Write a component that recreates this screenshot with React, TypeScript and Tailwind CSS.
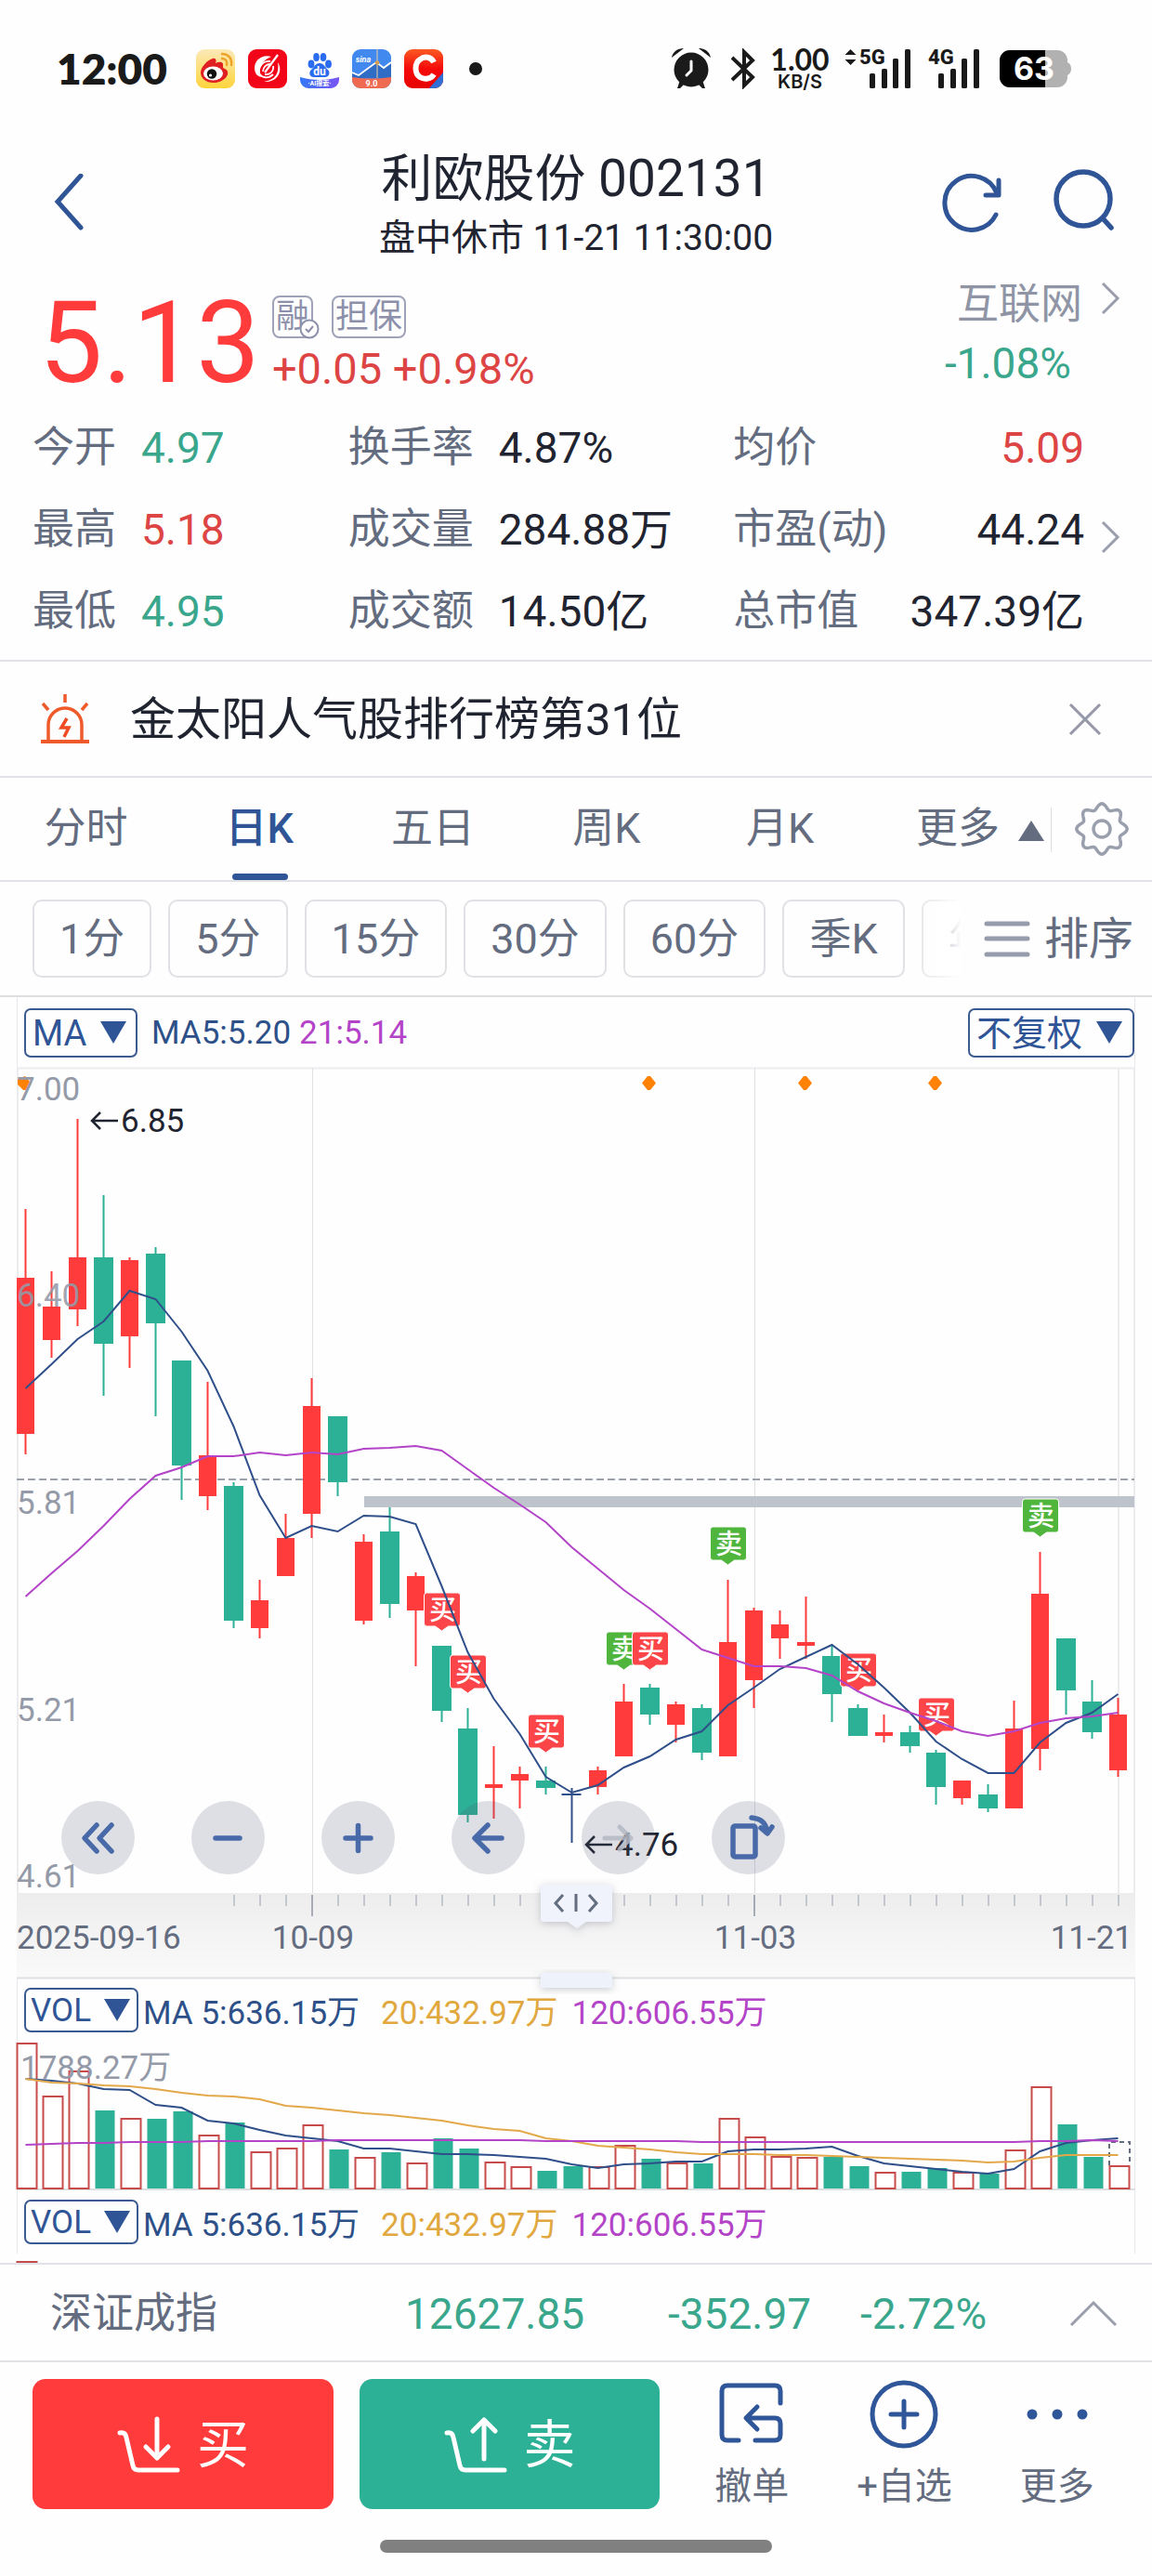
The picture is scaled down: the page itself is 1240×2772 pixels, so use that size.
import type { ReactNode } from "react";

type Candle = {
  up: boolean;
  high: number;
  top: number;
  bottom: number;
  low: number;
  vol: number;
};

// up/down, high, body top, body bottom, low, volume top (shared canvas units)
const RAW: [number, number, number, number, number, number][] = [
  [1, 1301, 1375, 1543, 1565, 2198],
  [1, 1368, 1406, 1442, 1461, 2255],
  [1, 1204, 1353, 1409, 1427, 2228],
  [0, 1286, 1353, 1446, 1502, 2271],
  [1, 1353, 1356, 1438, 1472, 2279],
  [0, 1342, 1349, 1424, 1524, 2280],
  [0, 1464, 1464, 1577, 1614, 2272],
  [1, 1487, 1566, 1610, 1625, 2297],
  [0, 1595, 1599, 1744, 1752, 2284],
  [1, 1700, 1722, 1752, 1763, 2315],
  [1, 1629, 1655, 1696, 1696, 2311],
  [1, 1483, 1513, 1629, 1655, 2286],
  [0, 1524, 1524, 1595, 1610, 2313],
  [1, 1651, 1659, 1744, 1748, 2321],
  [0, 1622, 1648, 1726, 1741, 2316],
  [1, 1692, 1696, 1733, 1793, 2327],
  [0, 1771, 1771, 1841, 1853, 2301],
  [0, 1838, 1860, 1953, 1961, 2312],
  [1, 1879, 1920, 1924, 1957, 2326],
  [1, 1901, 1909, 1916, 1946, 2331],
  [0, 1901, 1916, 1924, 1931, 2336],
  [0, 1924, 1931, 1931, 1983, 2331],
  [1, 1901, 1905, 1923, 1931, 2331],
  [1, 1812, 1831, 1890, 1890, 2308],
  [0, 1812, 1816, 1845, 1856, 2323],
  [1, 1831, 1834, 1856, 1875, 2327],
  [0, 1834, 1838, 1886, 1894, 2328],
  [1, 1700, 1767, 1890, 1890, 2279],
  [1, 1730, 1733, 1808, 1838, 2299],
  [1, 1733, 1748, 1763, 1785, 2320],
  [1, 1718, 1767, 1771, 1785, 2321],
  [0, 1771, 1782, 1823, 1853, 2321],
  [0, 1834, 1838, 1868, 1868, 2331],
  [1, 1845, 1864, 1868, 1875, 2337],
  [0, 1857, 1864, 1879, 1886, 2337],
  [0, 1883, 1886, 1923, 1942, 2333],
  [1, 1916, 1916, 1935, 1942, 2337],
  [0, 1920, 1931, 1946, 1950, 2339],
  [1, 1830, 1860, 1946, 1946, 2313],
  [1, 1670, 1715, 1882, 1905, 2245],
  [0, 1763, 1763, 1819, 1845, 2286],
  [0, 1808, 1831, 1864, 1871, 2321],
  [1, 1827, 1845, 1905, 1912, 2330],
];

const CANDLES: Candle[] = RAW.map(([up, high, top, bottom, low, vol]) => ({
  up: up === 1,
  high,
  top,
  bottom,
  low,
  vol,
}));

const MA5 = [
  1494, 1468, 1441, 1422, 1389, 1398, 1433, 1475, 1535, 1609, 1655, 1642, 1648, 1631, 1632,
  1640, 1707, 1778, 1828, 1866, 1912, 1929, 1921, 1902, 1890, 1872, 1863, 1835, 1816, 1796,
  1783, 1770, 1791, 1816, 1843, 1874, 1893, 1908, 1908, 1875, 1854, 1843, 1823,
];
const MA21 = [
  1718, 1693, 1669, 1642, 1613, 1588, 1579, 1567, 1567, 1563, 1566, 1563, 1565, 1559, 1558,
  1556, 1561, 1581, 1601, 1619, 1638, 1665, 1688, 1711, 1731, 1753, 1775, 1784, 1793, 1793,
  1795, 1803, 1820, 1833, 1843, 1852, 1863, 1868, 1863, 1854, 1849, 1847, 1843,
];
const VMA5 = [
  2237, 2239, 2242, 2248, 2249, 2265, 2268, 2282, 2285, 2292, 2298, 2301, 2304, 2312, 2312,
  2315, 2318, 2318, 2319, 2321, 2323, 2329, 2333, 2329, 2328, 2326, 2326, 2315, 2313, 2313,
  2312, 2310, 2320, 2328, 2331, 2334, 2337, 2339, 2334, 2315, 2306, 2303, 2301,
];
const VMA20 = [
  2237, 2241, 2242, 2244, 2245, 2248, 2252, 2255, 2256, 2259, 2266, 2268, 2271, 2274, 2276,
  2279, 2282, 2287, 2291, 2293, 2301, 2304, 2309, 2311, 2313, 2316, 2318, 2318, 2318, 2319,
  2319, 2320, 2321, 2322, 2323, 2324, 2325, 2327, 2326, 2322, 2319, 2319, 2319,
];
const VMA120 = [
  2308, 2307, 2306, 2306, 2305, 2305, 2305, 2304, 2304, 2304, 2304, 2304, 2303, 2303, 2303,
  2303, 2303, 2303, 2303, 2303, 2304, 2304, 2304, 2304, 2304, 2304, 2305, 2305, 2305, 2305,
  2305, 2305, 2305, 2305, 2305, 2305, 2305, 2305, 2305, 2304, 2304, 2303, 2304,
];

const SIGNALS = [
  { i: 16, y: 1714, buy: true },
  { i: 17, y: 1781, buy: true },
  { i: 20, y: 1845, buy: true },
  { i: 23, y: 1756, buy: false },
  { i: 24, y: 1756, buy: true },
  { i: 27, y: 1643, buy: false },
  { i: 32, y: 1779, buy: true },
  { i: 35, y: 1827, buy: true },
  { i: 39, y: 1613, buy: false },
];

const RED = "#ff3b3b";
const GREEN = "#2cb096";
const BLUE = "#2f4f8a";
const PURPLE = "#b344c8";
const ORANGE = "#e3a84a";

const cx = (i: number) => 27.5 + i * 28;
const line = (ys: number[]) => ys.map((y, i) => `${cx(i)},${y}`).join(" ");

// eight-lobed outline of the settings gear
const GEAR = Array.from({ length: 96 }, (_, k) => {
  const a = (k / 96) * Math.PI * 2;
  const r = 24.2 + 3 * Math.cos(8 * a);
  return `${(30 + r * Math.sin(a)).toFixed(2)},${(30 - r * Math.cos(a)).toFixed(2)}`;
}).join(" ");

function AppIcons() {
  return (
    <div className="flex items-center gap-[14px]">
      <svg viewBox="0 0 42 42" className="size-[42px]">
        <defs>
          <linearGradient id="wb" x1="0" y1="0" x2="0" y2="1">
            <stop offset="0" stopColor="#fbe9b8" />
            <stop offset="1" stopColor="#ffd43c" />
          </linearGradient>
        </defs>
        <rect width="42" height="42" rx="9" fill="url(#wb)" />
        <path d="M5 25c0-6 8-14 13-15 4-1 4 3 3 5 4-2 9-2 8 3 0 2 0 2 2 3 8 4 0 15-12 15C10 36 5 31 5 25z" fill="#e01f22" />
        <ellipse cx="18.500" cy="26" rx="10.500" ry="7.500" fill="#fff" />
        <circle cx="17" cy="26.500" r="5.200" fill="#111" />
        <circle cx="15.500" cy="28" r="1.600" fill="#fff" />
        <path d="M28 5c7 0 11 5 10 12M28 10c4 0 6 3 5 7" fill="none" stroke="#eda229" strokeWidth="2.400" strokeLinecap="round" />
      </svg>
      <svg viewBox="0 0 42 42" className="size-[42px]">
        <rect width="42" height="42" rx="9" fill="#f20519" />
        <path d="M25 8C14 5 7 13 7 20c0 6 3 9 7 10-4-7-1-17 11-22z" fill="#fff" />
        <path d="M32 14c6 9 0 22-15 21 12-2 17-9 15-21z" fill="#fff" />
        <path d="M24 13c-8-1-13 6-12 13 3 5 10 6 15 1M16 24c0-5 4-8 8-8M27 18c1 6-4 10-9 9" fill="none" stroke="#fff" strokeWidth="1.800" />
        <path d="M32 6 18 25" stroke="#fff" strokeWidth="2.200" />
      </svg>
      <svg viewBox="0 0 42 42" className="size-[42px]">
        <defs>
          <linearGradient id="bd" x1="0" y1="0" x2="1" y2="0">
            <stop offset="0" stopColor="#3478f6" />
            <stop offset="1" stopColor="#7b55f3" />
          </linearGradient>
        </defs>
        <path d="M0 30c14 4 28 4 42 0v3a9 9 0 0 1-9 9H9a9 9 0 0 1-9-9z" fill="url(#bd)" />
        <g fill="#2a6cf0">
          <ellipse cx="12" cy="16" rx="3.400" ry="4.400" />
          <ellipse cx="17.500" cy="8.500" rx="3.300" ry="4.500" />
          <ellipse cx="25" cy="8.500" rx="3.300" ry="4.500" />
          <ellipse cx="30.500" cy="16" rx="3.400" ry="4.400" />
          <path d="M21 15c5 0 6 5 9 7 3 3 1 8-3 8H15c-5 0-6-5-3-8 3-2 4-7 9-7z" />
        </g>
        <text x="21" y="28" textAnchor="middle" fontSize="12" fontWeight="700" fill="#fff">du</text>
        <text x="21" y="39" textAnchor="middle" fontSize="7" fontWeight="700" fill="#fff">·AI搜索·</text>
      </svg>
      <svg viewBox="0 0 42 42" className="size-[42px]">
        <rect width="42" height="42" rx="9" fill="#4189ee" />
        <path d="m0 26 7 2 18-14 9 6 8-7v18H0z" fill="#2f6cc6" />
        <path d="M0 25l7 3 19-14 8 6 8-6" fill="none" stroke="#fff" strokeWidth="1.800" />
        <path d="M27 0v31" stroke="#e9cfa2" strokeWidth="1" />
        <circle cx="27" cy="14.500" r="2.300" fill="#d8a04c" />
        <path d="M0 30c14 2 28 2 42 0v3a9 9 0 0 1-9 9H9a9 9 0 0 1-9-9z" fill="#ee6a50" />
        <text x="12" y="14" textAnchor="middle" fontSize="9" fontStyle="italic" fontWeight="700" fill="#fff">sina</text>
        <text x="21" y="40" textAnchor="middle" fontSize="9" fontWeight="700" fill="#fff">9.0</text>
      </svg>
      <svg viewBox="0 0 42 42" className="size-[42px]">
        <defs>
          <linearGradient id="cc" x1="0" y1="0" x2="0" y2="1">
            <stop offset="0" stopColor="#fb5a22" />
            <stop offset=".5" stopColor="#f50a0a" />
            <stop offset="1" stopColor="#e60202" />
          </linearGradient>
        </defs>
        <rect width="42" height="42" rx="9" fill="url(#cc)" />
        <path d="M42 25v8a9 9 0 0 1-9 9h-6z" fill="#2f6fd6" />
        <path d="M32 14c-3-6-10-7-15-3-6 4-6 15 0 19 5 3 12 2 15-3" fill="none" stroke="#fff" strokeWidth="6" />
      </svg>
      <span className="ml-[14px] size-[14px] rounded-full bg-[#1a1a1a]" />
    </div>
  );
}

function Signal({ label, arrows }: { label: string; arrows?: boolean }) {
  return (
    <svg viewBox="0 0 56 44" className="h-[44px] w-[56px] overflow-visible" fill="#1a1a1a">
      {arrows && <path d="m-9.500 1 6 6h-12zM-9.500 18l6-6h-12z" />}
      <text x="0" y="17" fontSize="22" fontWeight="800" fontFamily="Roboto">{label}</text>
      <rect x="11" y="27" width="6" height="16" rx="1.500" />
      <rect x="24" y="22" width="6" height="21" rx="1.500" />
      <rect x="36" y="11" width="6" height="32" rx="1.500" />
      <rect x="49" y="1" width="6" height="42" rx="1.500" />
    </svg>
  );
}

function StatusBar() {
  return (
    <div className="flex h-[148px] items-center justify-between pr-[87px] pl-[61px] text-[#1a1a1a]">
      <div className="flex items-center gap-[31px]">
        <span className="font-[Lato] text-[46px] leading-none font-extrabold">12:00</span>
        <AppIcons />
      </div>
      <div className="flex items-center">
        <svg viewBox="0 0 42 44" className="h-[44px] w-[42px]" fill="#1a1a1a">
          <circle cx="21" cy="23" r="18.500" />
          <path d="M9 34 6 43h3l6-6zM33 34l3 9h-3l-6-6z" />
          <path d="M0 10C1 4 6 0 13 0zM42 10C41 4 36 0 29 0z" />
          <path d="M21 14v10l-5 5" fill="none" stroke="#fff" strokeWidth="3" strokeLinecap="round" />
        </svg>
        <svg viewBox="0 0 26 44" className="ml-[22px] h-[44px] w-[26px]" fill="none" stroke="#1a1a1a" strokeWidth="4">
          <path d="m1 10 22 21-9 9V4l9 9L1 34" />
        </svg>
        <div className="ml-[16px] flex w-[64px] flex-col items-center">
          <span className="font-[Lato] text-[32px] leading-[28px] font-bold">1.00</span>
          <span className="font-[Inter] text-[20px] leading-[20px] font-semibold">KB/S</span>
        </div>
        <div className="ml-[32px] flex gap-[18px]">
          <Signal label="5G" arrows />
          <Signal label="4G" />
        </div>
        <svg viewBox="0 0 77 40" className="ml-[21px] h-[40px] w-[77px]">
          <rect width="73" height="40" rx="11" fill="#b1b1b1" />
          <path d="M73 13q4 2 4 7t-4 7z" fill="#b1b1b1" />
          <path d="M11 0h38v40H11A11 11 0 0 1 0 29V11A11 11 0 0 1 11 0z" fill="#000" />
          <text x="37" y="32" textAnchor="middle" fontSize="34" fontWeight="700" fontFamily="Inter" fill="#fff">63</text>
        </svg>
      </div>
    </div>
  );
}

function Header() {
  return (
    <header className="grid h-[142px] grid-cols-[1fr_auto_1fr] items-center text-[#1f2430]">
      <button aria-label="返回" className="ml-[56px] w-[40px]">
        <svg viewBox="0 0 40 64" className="h-[64px] w-[40px]" fill="none" stroke="#2f5597" strokeWidth="5" strokeLinecap="round">
          <path d="M31 2 6 30l25 28" />
        </svg>
      </button>
      <div className="pt-[8px] text-center">
        <h1 className="text-[55px] leading-[66px]">利欧股份 002131</h1>
        <p className="text-[39px] leading-[62px]">盘中休市 11-21 11:30:00</p>
      </div>
      <div className="mr-[40px] flex items-center justify-end gap-[51px]">
        <button aria-label="刷新">
          <svg viewBox="0 0 68 68" className="size-[68px]" fill="none" stroke="#2f5597" strokeWidth="5" strokeLinecap="round" strokeLinejoin="round">
            <path d="M59 46A29 29 0 1 1 60 23" />
            <path d="M62 9v16H48" />
          </svg>
        </button>
        <button aria-label="搜索">
          <svg viewBox="0 0 68 68" className="size-[68px] overflow-visible" fill="none" stroke="#2f5597" strokeWidth="5.500" strokeLinecap="round">
            <circle cx="34" cy="29" r="29" />
            <path d="m55 50 9 10" />
          </svg>
        </button>
      </div>
    </header>
  );
}

function Chevron() {
  return (
    <svg viewBox="0 0 22 36" className="h-[36px] w-[22px]" fill="none" stroke="#9a9eac" strokeWidth="3">
      <path d="m2 2 16 16L2 34" />
    </svg>
  );
}

const STATS = [
  [["今开", "4.97", "text-[#3aa78d]"], ["换手率", "4.87%", ""], ["均价", "5.09", "text-[#dd4545]"]],
  [["最高", "5.18", "text-[#dd4545]"], ["成交量", "284.88万", ""], ["市盈(动)", "44.24", ""]],
  [["最低", "4.95", "text-[#3aa78d]"], ["成交额", "14.50亿", ""], ["总市值", "347.39亿", ""]],
];

function Quote() {
  return (
    <section className="border-b-2 border-[#e1e2e6]">
      <div className="flex h-[146px] pl-[42px]">
        <span className="text-[122px] leading-[160px] text-[#ff3b3b]">5.13</span>
        <div className="ml-[13px] pt-[28px]">
          <div className="flex gap-[20px] text-[36px] leading-[42px] text-[#8d90aa]">
            <span className="relative rounded-[8px] border-2 border-[#9fa2b8] px-[2px]">
              融
              <svg viewBox="0 0 22 22" className="absolute -right-[9px] -bottom-[3px] size-[22px]" fill="#fff" stroke="#8d90aa" strokeWidth="2">
                <circle cx="11" cy="11" r="9.500" />
                <path d="m7 11 3 3 5-6" fill="none" />
              </svg>
            </span>
            <span className="rounded-[8px] border-2 border-[#9fa2b8] px-[2px]">担保</span>
          </div>
          <p className="mt-[6px] text-[47px] leading-[54px] text-[#dd4545]">+0.05 +0.98%</p>
        </div>
        <a href="#sector" className="mr-[33px] ml-auto flex gap-[20px] pt-[8px]">
          <span className="text-right">
            <span className="block text-[45px] leading-[60px] text-[#8f95a5]">互联网</span>
            <span className="mr-[12px] block text-[46px] leading-[66px] text-[#3aa78d]">-1.08%</span>
          </span>
          <span className="pt-[5px]">
            <Chevron />
          </span>
        </a>
      </div>
      <div className="relative pt-[2px] pr-[73px] pb-[8px] pl-[35px]">
        {STATS.map((row) => (
          <dl key={row[0][0]} className="grid h-[88px] grid-cols-[340fr_415fr_378fr] items-center">
            {row.map(([label, value, color], i) => (
              <div key={label} className={i === 2 ? "flex justify-between" : "flex gap-[27px]"}>
                <dt className="text-[45px] leading-[60px] text-[#646c80]">{label}</dt>
                <dd className={`text-[46px] leading-[60px] ${color || "text-[#1f2430]"}`}>{value}</dd>
              </div>
            ))}
          </dl>
        ))}
        <a href="#detail" aria-label="详情" className="absolute top-[124px] right-[33px]">
          <Chevron />
        </a>
      </div>
    </section>
  );
}

function Notice() {
  return (
    <div className="flex h-[125px] items-center border-b-2 border-[#e1e2e6] pr-[52px] pl-[42px]">
      <svg viewBox="0 0 56 56" className="size-[56px]" fill="none" stroke="#ee5a2a" strokeWidth="3.500">
        <path d="M10 51V34a18 18 0 0 1 36 0v17" />
        <path d="M2 52h52" strokeWidth="4" />
        <path d="M28 1v9M4 11l6 7M52 11l-6 7" />
        <path d="m30 27-6 10h8l-5 10" stroke="#f04a22" />
      </svg>
      <p className="ml-[42px] pt-[3px] text-[49px] leading-[64px] text-[#1f2430]">金太阳人气股排行榜第31位</p>
      <button aria-label="关闭" className="ml-auto">
        <svg viewBox="0 0 40 40" className="size-[40px]" fill="none" stroke="#9598a8" strokeWidth="3">
          <path d="m4 4 32 32M36 4 4 36" />
        </svg>
      </button>
    </div>
  );
}

const TABS = ["分时", "日K", "五日", "周K", "月K"];

function Tabs() {
  return (
    <nav className="flex h-[112px] border-b-2 border-[#e1e2e6] text-[45px] leading-[60px] text-[#646c80]">
      {TABS.map((tab) => (
        <button key={tab} className="relative flex-1 pr-[2px]">
          {tab === "日K" ? (
            <>
              <span className="font-medium text-[#2f5597]">{tab}</span>
              <span className="absolute bottom-0 left-1/2 h-[7px] w-[60px] -translate-x-1/2 rounded-[4px] bg-[#2f5597]" />
            </>
          ) : (
            tab
          )}
        </button>
      ))}
      <button className="flex items-center gap-[20px] pl-[52px]">
        更多
        <svg viewBox="0 0 28 22" className="mt-[4px] h-[22px] w-[28px]" fill="#646c80">
          <path d="M14 0l14 22H0z" />
        </svg>
      </button>
      <span className="mt-[32px] ml-[7px] h-[48px] w-px bg-[#dcdde2]" />
      <button aria-label="设置" className="mr-[24px] ml-[24px]">
        <svg viewBox="0 0 60 60" className="size-[60px]" fill="none" stroke="#9a9fae" strokeWidth="3.500" strokeLinejoin="round">
          <polygon points={GEAR} />
          <circle cx="30" cy="30" r="9" />
        </svg>
      </button>
    </nav>
  );
}

const PERIODS = ["1分", "5分", "15分", "30分", "60分", "季K", "年K"];

function Periods() {
  return (
    <div className="flex h-[124px] items-center border-b-2 border-[#dedfe3] pr-[20px] pl-[35px] text-[#646c80]">
      <div className="relative flex min-w-0 flex-1 gap-[18px] overflow-hidden">
        {PERIODS.map((p) => (
          <button key={p} className="h-[84px] shrink-0 rounded-[10px] border-2 border-[#e0e1e5] px-[27px] pt-[2px] text-[45px] leading-[60px]">
            {p}
          </button>
        ))}
        <span className="absolute inset-y-0 right-0 w-[46px] bg-gradient-to-r from-white/20 to-white" />
      </div>
      <button className="ml-[24px] flex items-center gap-[15px] pt-[2px] text-[48px] leading-[60px]">
        <svg viewBox="0 0 50 40" className="h-[40px] w-[50px]" stroke="#969cab" strokeWidth="5" strokeLinecap="round">
          <path d="M3 3h44M3 19h44M3 36h44" />
        </svg>
        排序
      </button>
    </div>
  );
}

function Picker({ label, value, className }: { label: string; value: string; className: string }) {
  return (
    <label className={`flex items-center gap-[14px] rounded-[7px] border-2 border-[#3a5a90] text-[#2f5597] ${className}`}>
      <select aria-label={label} className="appearance-none bg-transparent pt-[2px] outline-none">
        <option>{value}</option>
      </select>
      <svg viewBox="0 0 28 24" className="h-[24px] w-[28px] shrink-0" fill="#2f5597">
        <path d="M0 0h28L14 24z" />
      </svg>
    </label>
  );
}

function Round({ label, children, faded }: { label: string; children: ReactNode; faded?: boolean }) {
  return (
    <button aria-label={label} className="flex size-[79px] items-center justify-center rounded-full bg-[#50546e]/18">
      <svg
        viewBox="0 0 40 40"
        className="size-[40px] overflow-visible"
        fill="none"
        stroke={faded ? "#b4b8c4" : "#486aa8"}
        strokeOpacity={faded ? 0.85 : 1}
        strokeWidth="5.500"
        strokeLinecap="round"
        strokeLinejoin="round"
      >
        {children}
      </svg>
    </button>
  );
}

function Candles() {
  return (
    <g>
      {CANDLES.map((c, i) => {
        const x = cx(i);
        if (c.top === c.bottom) {
          return <path key={i} d={`M${x - 11} ${c.top}h21M${x} ${c.high}V${c.low}`} stroke={BLUE} strokeWidth="2" />;
        }
        const w = c.up ? 19 : 21;
        return (
          <g key={i} fill={c.up ? RED : GREEN}>
            <rect x={x - 1} y={c.high} width="2" height={c.low - c.high} />
            <rect x={x - w / 2} y={c.top} width={w} height={c.bottom - c.top} />
          </g>
        );
      })}
    </g>
  );
}

function KChart() {
  return (
    <div className="relative z-10">
      <svg viewBox="0 1149 1240 979" className="block w-full overflow-visible">
        <defs>
          <linearGradient id="axis" x1="0" y1="0" x2="0" y2="1">
            <stop offset="0" stopColor="#ededee" />
            <stop offset="1" stopColor="#fafafa" />
          </linearGradient>
          <filter id="soft" x="-20%" y="-20%" width="140%" height="160%">
            <feDropShadow dx="0" dy="2" stdDeviation="4" floodColor="#6b7080" floodOpacity=".35" />
          </filter>
        </defs>
        <g stroke="#ececef" strokeWidth="2">
          <path d="M18 1149.500H1222M19 1149V2128M1221 1149V2037M1204 1149V2037" />
          <path d="M336.500 1149V2037M812.500 1149V2037" stroke="#dfe0e4" strokeWidth="1" />
        </g>
        <rect x="392" y="1610" width="829" height="12" fill="#bec3cc" />
        <path d="M18 1592H1221" stroke="#9aa3ae" strokeWidth="2" strokeDasharray="8 4" />
        <Candles />

        <g fill="#ff8205">
          <path d="M19 1161l8-3 7 8-5 7h-4l-6-6z" />
          {[698.5, 866.5, 1006.5].map((x) => (
            <path key={x} d={`M${x - 1.5} 1158h3l6 7.500-6 7.500h-3l-6-7.500z`} />
          ))}
        </g>
        <g fontSize="35" fill="#949aa8">
          <text x="18" y="1184">7.00</text>
          <text x="18" y="1406" fillOpacity=".9">6.40</text>
          <text x="18" y="1629">5.81</text>
          <text x="18" y="1852">5.21</text>
          <text x="18" y="2031">4.61</text>
        </g>

        {SIGNALS.map((s) => (
          <g key={s.i} fill={s.buy ? "#fb4548" : "#50b53c"}>
            <path
              d={`M${cx(s.i) - 19} ${s.y + 3}q0-3 3-3h33q3 0 3 3v30q0 3-3 3h-10l-7 5-7-5h-9q-3 0-3-3z`}
              stroke="#fff"
              strokeWidth="1"
            />
            <text x={cx(s.i) + 1} y={s.y + 29} textAnchor="middle" fontSize="29" fontWeight="500" fill="#fff">
              {s.buy ? "买" : "卖"}
            </text>
          </g>
        ))}

        <polyline points={line(MA5)} fill="none" stroke={BLUE} strokeWidth="2" />
        <polyline points={line(MA21)} fill="none" stroke={PURPLE} strokeWidth="2" />

        <g fontSize="35" fill="#1f2430">
          <path d="M127 1206H99M108 1197l-9 9 9 9" fill="none" stroke="#1f2430" strokeWidth="2.500" />
          <text x="130" y="1218">6.85</text>
          <path d="M659 1985h-28M640 1976l-9 9 9 9" fill="none" stroke="#1f2430" strokeWidth="2.500" />
          <text x="662" y="1997">4.76</text>
        </g>

        <rect x="18" y="2037" width="1204" height="91" fill="url(#axis)" />
        <path d="M18 2128.500H1222" stroke="#dedfe3" strokeWidth="2" />
        {CANDLES.map((_, i) =>
          i < 8 ? null : (
            <path key={i} d={`M${cx(i) + 0.5} 2039V${i === 11 || i === 28 ? 2062 : 2051}`} stroke={i === 11 || i === 28 ? "#5f677a" : "#9aa0ae"} />
          ),
        )}
        <g fontSize="35" fill="#646c80">
          <text x="18" y="2097">2025-09-16</text>
          <text x="337" y="2097" textAnchor="middle">10-09</text>
          <text x="813" y="2097" textAnchor="middle">11-03</text>
          <text x="1219" y="2097" textAnchor="end">11-21</text>
        </g>
        <path d="M582 2031q0-3 3-3h71q3 0 3 3v33q0 4-3 4h-25l-10 7-10-7h-26q-3 0-3-4z" fill="#f0f3fc" filter="url(#soft)" />
        <path d="M606 2039l-8 9 8 9M634 2039l8 9-8 9M620 2038v19" fill="none" stroke="#646c80" strokeWidth="3" />
        <path d="M582 2139v-12q0-4 4-4h69q4 0 4 4v12z" fill="#eef2fb" filter="url(#soft)" />
      </svg>

      {/* zoom and pan controls float above the candles */}
      <div className="absolute bottom-[111px] left-[66px] flex gap-[61px]">
        <Round label="最早">
          <path d="M18 6 5 20l13 14M34 6 21 20l13 14" />
        </Round>
        <Round label="缩小">
          <path d="M6 20h26" />
        </Round>
        <Round label="放大">
          <path d="M6 20h27M19.500 6.500v27" />
        </Round>
        <Round label="左移">
          <path d="M34 20H5M19 6 5 20l14 14" />
        </Round>
        <Round label="右移" faded>
          <path d="M5 20h28M21 8l12 12-12 12" strokeWidth="5" />
        </Round>
        <Round label="横屏">
          <rect x="3" y="7" width="24" height="33" rx="2" />
          <path d="M23-2c11 1 15 6 17 15M33 9l7 6 5-7" />
        </Round>
      </div>
    </div>
  );
}

function VolumeHeader({ className }: { className: string }) {
  return (
    <div className={`mx-[18px] flex items-center border-x border-[#e6e7ea] pl-[7px] text-[35px] leading-[44px] ${className}`}>
      <Picker label="副图指标" value="VOL" className="h-[48px] pr-[7px] pl-[5px]" />
      <p className="mt-[8px] ml-[5px] flex">
        <span className="text-[#2d5089]">MA 5:636.15万</span>
        <span className="ml-[23px] text-[#e0a83f]">20:432.97万</span>
        <span className="ml-[15px] text-[#b344c8]">120:606.55万</span>
      </p>
    </div>
  );
}

function VolumeChart() {
  return (
    <svg viewBox="0 2197 1240 160" className="block w-full">
      <path d="M19 2197V2357M1221.500 2197V2357" stroke="#e6e7ea" />
      <path d="M18 2356H1222" stroke="#dcdde1" strokeWidth="2" />
      {CANDLES.map((c, i) =>
        c.up ? (
          <rect key={i} x={cx(i) - 9} y={c.vol + 1} width="21" height={2354 - c.vol} fill="#fff" stroke="#c84b4b" strokeWidth="2" />
        ) : (
          <rect key={i} x={cx(i) - 9} y={c.vol} width="21" height={2355 - c.vol} fill={GREEN} />
        ),
      )}
      <path d="M1194 2330v-25h22v25" fill="none" stroke="#646c80" strokeWidth="2" strokeDasharray="5 4" />
      <text x="22" y="2237" fontSize="35" fill="#949aa8">1788.27万</text>
      <g fill="none" strokeWidth="2">
        <polyline points={line(VMA5)} stroke={BLUE} />
        <polyline points={line(VMA20)} stroke={ORANGE} />
        <polyline points={line(VMA120)} stroke={PURPLE} />
      </g>
    </svg>
  );
}

function IndexBar() {
  return (
    <div className="flex h-[107px] items-center border-y-2 border-[#e1e2e6] pt-[3px] pr-[36px] pl-[54px] text-[46px] leading-[60px] text-[#3aa78d]">
      <span className="flex-[382] text-[45px] text-[#646c80]">深证成指</span>
      <span className="flex-[283]">12627.85</span>
      <span className="flex-[207]">-352.97</span>
      <span className="flex-[224]">-2.72%</span>
      <button aria-label="展开">
        <svg viewBox="0 0 54 30" className="h-[30px] w-[54px]" fill="none" stroke="#9a9eac" strokeWidth="3">
          <path d="m3 27 24-24 24 24" />
        </svg>
      </button>
    </div>
  );
}

function Action({ label, children }: { label: string; children: ReactNode }) {
  return (
    <button className="flex flex-1 flex-col items-center text-[40px] leading-[46px] text-[#646c80]">
      <svg viewBox="0 0 76 76" className="size-[76px]" fill="none" stroke="#30569a" strokeWidth="5" strokeLinecap="round" strokeLinejoin="round">
        {children}
      </svg>
      <span className="mt-[17px]">{label}</span>
    </button>
  );
}

function TradeBar() {
  return (
    <footer className="flex pt-[18px] pr-[20px] pl-[35px]">
      <button className="flex h-[140px] flex-[324] items-center justify-center gap-[18px] rounded-[14px] bg-[#ff3b3b] pt-[2px] text-[56px] leading-none text-white">
        <svg viewBox="0 0 68 64" className="h-[64px] w-[68px]" fill="none" stroke="#fff" strokeWidth="5" strokeLinecap="round" strokeLinejoin="round">
          <path d="M3 19q6-1 7 5l7 30q1 5 6 5h42" />
          <path d="M43 4v42M31 34l12 12 12-12" />
        </svg>
        买
      </button>
      <button className="ml-[28px] flex h-[140px] flex-[323] items-center justify-center gap-[18px] rounded-[14px] bg-[#2cb096] pt-[2px] text-[56px] leading-none text-white">
        <svg viewBox="0 0 68 64" className="h-[64px] w-[68px]" fill="none" stroke="#fff" strokeWidth="5" strokeLinecap="round" strokeLinejoin="round">
          <path d="M3 19q6-1 7 5l7 30q1 5 6 5h42" />
          <path d="M43 47V5M31 17 43 5l12 12" />
        </svg>
        卖
      </button>
      <div className="ml-[17px] flex flex-[493]">
        <Action label="撤单">
          <path d="M69 26V13q0-6-6-6H12q-6 0-6 6v47q0 6 6 6h12" />
          <path d="M42 66h21q6 0 6-6V48q0-6-6-6H33M44 30 32 42l12 12" />
        </Action>
        <Action label="+自选">
          <circle cx="38" cy="38" r="34" />
          <path d="M38 24v28M24 38h28" />
        </Action>
        <Action label="更多">
          <g fill="#30569a" stroke="none">
            <circle cx="11" cy="38" r="5.500" />
            <circle cx="38" cy="38" r="5.500" />
            <circle cx="65" cy="38" r="5.500" />
          </g>
        </Action>
      </div>
    </footer>
  );
}

export default function App() {
  return (
    <main className="overflow-hidden bg-[#fefefe] font-[Roboto,'Noto_Sans_CJK_SC',sans-serif]">
      <StatusBar />
      <Header />
      <Quote />
      <Notice />
      <Tabs />
      <Periods />
      <div className="mx-[18px] flex h-[76px] items-center border-x border-[#e6e7ea] pl-[7px] text-[35px]">
        <Picker label="主图指标" value="MA" className="h-[53px] pr-[10px] pl-[7px] text-[38px]" />
        <span className="ml-[15px] pt-[2px] text-[#2d5089]">MA5:5.20</span>
        <span className="ml-[9px] pt-[2px] text-[#b344c8]">21:5.14</span>
        <Picker label="复权" value="不复权" className="ml-auto h-[53px] pr-[11px] pl-[7px] text-[38px]" />
      </div>
      <KChart />
      <VolumeHeader className="h-[69px]" />
      <VolumeChart />
      <VolumeHeader className="h-[68px]" />
      <svg viewBox="0 0 1240 10" className="block w-full">
        <path d="M18.500 12V9h21v3" fill="none" stroke="#c84b4b" strokeWidth="2" />
      </svg>
      <IndexBar />
      <TradeBar />
      <div className="mx-auto mt-[33px] mb-[25px] h-[14px] w-[34%] rounded-full bg-[#808080]" />
    </main>
  );
}
